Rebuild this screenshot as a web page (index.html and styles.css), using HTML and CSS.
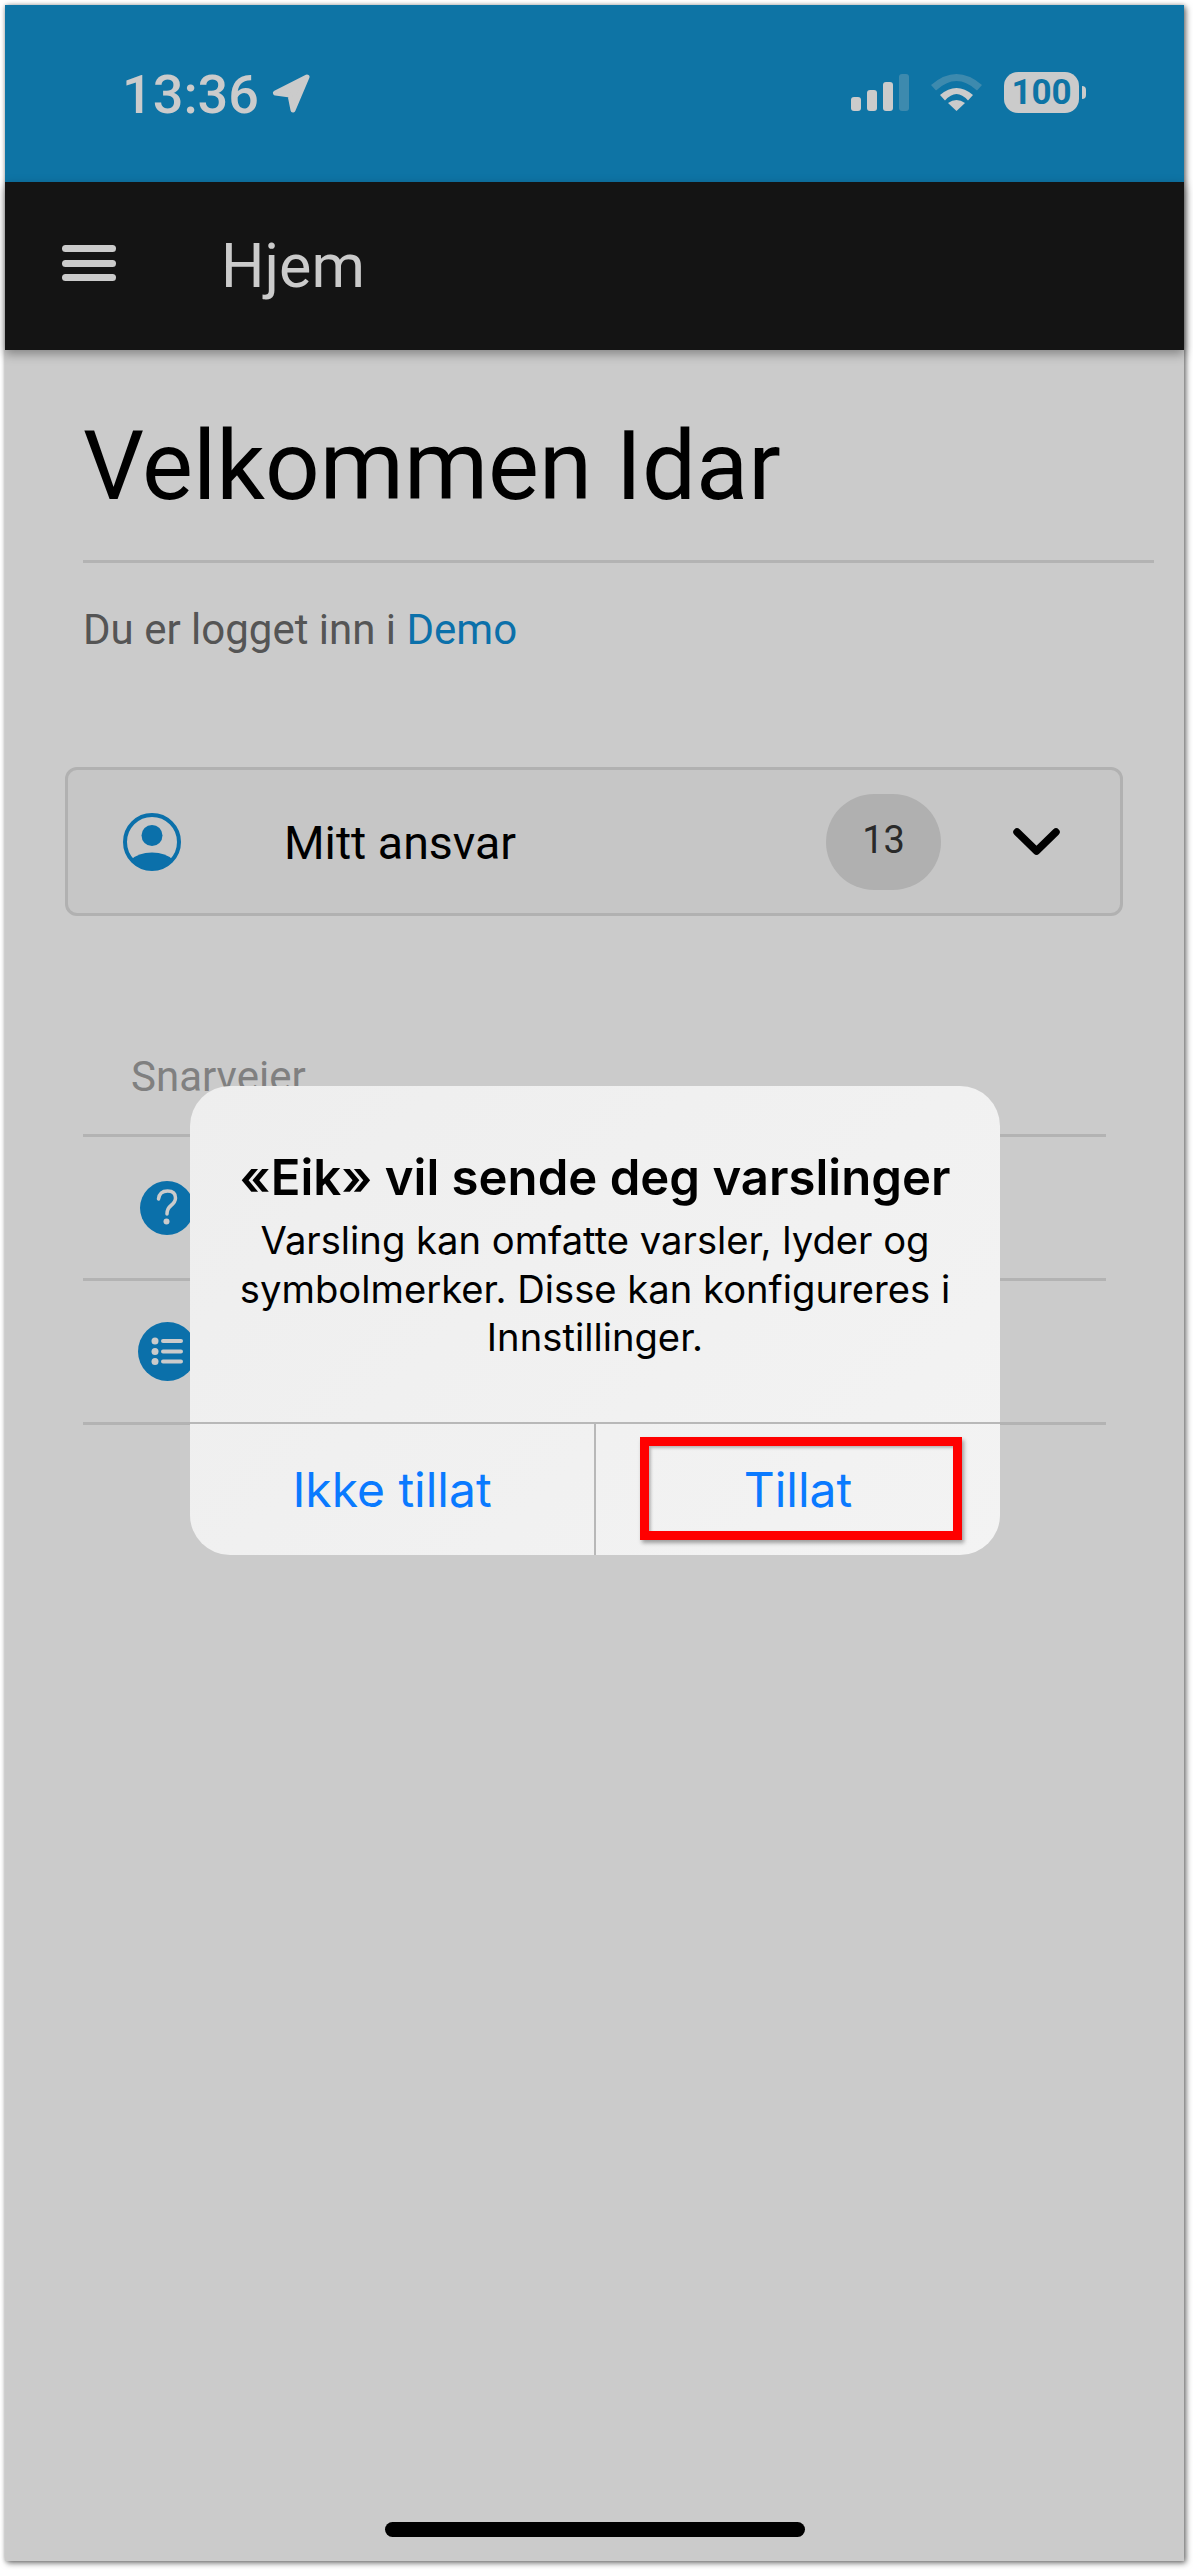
FILE: index.html
```html
<!DOCTYPE html>
<html lang="no">
<head>
<meta charset="utf-8">
<title>Eik</title>
<link rel="stylesheet" href="styles.css">
</head>
<body>
<div class="phone">
  <div class="status">
    <div class="status-left">
      <span class="time">13:36</span>
      <svg class="loc" viewBox="0 0 39 39"><path d="M35 3 3.500 19 18 21 21 36Z"/></svg>
    </div>
    <div class="status-right">
      <div class="signal"><i class="b1"></i><i class="b2"></i><i class="b3"></i><i class="b4"></i></div>
      <svg class="wifi" viewBox="0 0 51 37"><path class="dim" d="M0 11Q25.500-11 51 11L46 16.500Q25.500-2.500 5 16.500Z"/><path d="M9 21Q25.500 7 42 21L37 26.500Q25.500 13.500 14 26.500Z"/><path d="M17 29Q25.500 23 34 29L25.500 37Z"/></svg>
      <div class="battery"><span class="batt-body">100</span><span class="batt-nub"></span></div>
    </div>
  </div>
  <header class="appbar">
    <div class="burger"><i></i><i></i><i></i></div>
    <div class="appbar-title">Hjem</div>
  </header>
  <main class="content">
    <h1 class="welcome">Velkommen Idar</h1>
    <p class="logged">Du er logget inn i <a class="link">Demo</a></p>
    <div class="card">
      <svg class="person" viewBox="0 0 58 58"><circle cx="29" cy="29" r="27" fill="none" stroke="#0b70aa" stroke-width="4"/><circle cx="29" cy="22.500" r="10.500" fill="#0b70aa"/><path d="M8 47Q15 39.500 29 39.500T50 47A27 27 0 0 1 8 47Z" fill="#0b70aa"/></svg>
      <span class="card-label">Mitt ansvar</span>
      <span class="badge">13</span>
      <svg class="chevron" viewBox="0 0 47 27"><path d="M4 4 23.500 23 43 4" fill="none" stroke="#000" stroke-width="7.500" stroke-linecap="round" stroke-linejoin="round"/></svg>
    </div>
    <section class="shortcuts">
      <div class="shortcuts-head">Snarveier</div>
      <div class="row">
        <svg class="round-icon q" viewBox="0 0 54 54"><circle cx="27" cy="27" r="27" fill="#0b70aa"/><path d="M18.500 18Q19.500 10 27.500 10 35.500 10 35.500 17 35.500 21 31 24.500 27 27.500 27 33" fill="none" stroke="#cbcbcb" stroke-width="3.500" stroke-linecap="round"/><circle cx="26.500" cy="40.500" r="3" fill="#cbcbcb"/></svg>
      </div>
      <div class="row">
        <svg class="round-icon l" viewBox="0 0 59 59"><circle cx="29.500" cy="29.500" r="29.500" fill="#0b70aa"/><g fill="#cbcbcb"><circle cx="17" cy="19" r="3.500"/><circle cx="17" cy="29.500" r="3.500"/><circle cx="17" cy="39.500" r="3.500"/><rect x="23" y="17" width="22" height="4" rx="2"/><rect x="23" y="27.500" width="22" height="4" rx="2"/><rect x="23" y="37.500" width="22" height="4" rx="2"/></g></svg>
      </div>
    </section>
  </main>
  <div class="home-bar"></div>
  <div class="dialog">
    <div class="dialog-text">
      <div class="dialog-title">«Eik» vil sende deg varslinger</div>
      <div class="dialog-body">Varsling kan omfatte varsler, lyder og<br>symbolmerker. Disse kan konfigureres i<br>Innstillinger.</div>
    </div>
    <div class="dialog-buttons">
      <div class="dialog-btn">Ikke tillat</div>
      <div class="dialog-btn">Tillat</div>
    </div>
    <div class="highlight"></div>
  </div>
</div>
</body>
</html>
```
FILE: styles.css
```css
* { box-sizing: border-box; }
html, body { margin: 0; padding: 0; background: #fff; }
body { padding: 5px 0 0 5px; height: 2570px; overflow: hidden; font-family: Roboto, "Liberation Sans", sans-serif; }

.phone {
  position: relative;
  width: 1179px;
  height: 2556px;
  background: #cbcbcb;
  box-shadow: 2px 2px 6px rgba(0,0,0,.55), 0 0 4px rgba(0,0,0,.2);
  display: flex;
  flex-direction: column;
}

.status {
  height: 177px;
  background: #0e74a5;
  display: flex;
  justify-content: space-between;
  padding: 67px 98px 0 117px;
  color: #cbcbcb;
}
.status-left { display: flex; align-items: flex-start; gap: 13px; }
.time { font-size: 54px; font-weight: 500; line-height: 46px; }
.loc { width: 39px; height: 39px; margin-top: 2px; fill: #cbcbcb; stroke: #cbcbcb; stroke-width: 5; stroke-linejoin: round; }
.status-right { display: flex; align-items: flex-start; }
.signal { display: flex; align-items: flex-end; gap: 6px; height: 37px; margin-top: 2px; }
.signal i { display: block; width: 10px; border-radius: 3px; background: #cbcbcb; }
.b1 { height: 14px; }
.b2 { height: 21px; }
.b3 { height: 29px; }
.signal .b4 { height: 37px; background: rgba(203,203,203,.25); }
.wifi { width: 51px; height: 37px; margin: 2px 0 0 22px; fill: #cbcbcb; }
.wifi .dim { opacity: .25; }
.battery { display: flex; align-items: center; margin-left: 22px; height: 41px; }
.batt-body {
  width: 75px; height: 41px; border-radius: 14px; background: #cbcbcb;
  color: #0e74a5; font-size: 35px; font-weight: 700; line-height: 41px; text-align: center;
}
.batt-nub { width: 4px; height: 13px; margin-left: 3px; background: #cbcbcb; border-radius: 0 7px 7px 0; }

.appbar {
  height: 168px;
  background: #141414;
  display: flex;
  align-items: center;
  color: #cbcbcb;
  box-shadow: 0 4px 10px rgba(0,0,0,.35);
  position: relative;
}
.burger { display: flex; flex-direction: column; gap: 7.500px; margin-left: 57px; width: 54px; margin-top: -6px; }
.burger i { display: block; height: 7px; border-radius: 3.500px; background: #cbcbcb; }
.appbar-title { font-size: 61px; margin-left: 105px; font-weight: 400; line-height: 68px; }

.content { flex: 1; padding: 0 30px 0 78px; }
.welcome {
  margin: 0; padding: 60px 0 38px;
  font-size: 96px; font-weight: 400; line-height: 112px; color: #000;
  border-bottom: 3px solid #b3b3b3;
}
.logged { margin: 44px 0 0; font-size: 42px; line-height: 46px; color: #555; }
.link { color: #0b70aa; }

.card {
  display: flex; align-items: center;
  width: 1058px; height: 149px; margin: 114px 0 0 -18px;
  border: 3px solid #b1b1b1; border-radius: 12px; background: #c6c6c6;
  padding-right: 60px;
}
.person { width: 58px; height: 58px; margin-left: 55px; }
.card-label { margin-left: 103px; padding-top: 2px; font-size: 46.500px; color: #000; }
.badge {
  margin-left: auto; width: 115px; height: 96px; border-radius: 48px;
  background: #b0b0b0; color: #2a2a2a; font-size: 38px; font-weight: 400; line-height: 92px; text-align: center;
}
.chevron { width: 47px; height: 27px; margin-left: 72px; }

.shortcuts { width: 1023px; margin-top: 115px; }
.shortcuts-head {
  height: 106px; padding: 22px 0 0 48px;
  font-size: 42px; line-height: 48px; color: #808080;
  border-bottom: 3px solid #b3b3b3;
}
.row { height: 144px; border-bottom: 3px solid #b3b3b3; display: flex; align-items: center; }
.round-icon { display: block; }
.q { width: 54px; height: 54px; margin-left: 57px; }
.l { width: 59px; height: 59px; margin-left: 55px; }

.home-bar { width: 420px; height: 15px; border-radius: 8px; background: #000; margin: 0 auto 24px; }

.dialog {
  position: absolute; left: 185px; top: 1081px;
  width: 810px; height: 469px; border-radius: 40px;
  background: linear-gradient(135deg, #eeeeee, #f3f3f3);
  display: flex; flex-direction: column;
  font-family: Inter, Roboto, sans-serif;
}
.dialog-text { flex: none; height: 336px; padding-top: 62px; text-align: center; color: #000; }
.dialog-title { font-size: 49.100px; font-weight: 600; line-height: 58px; }
.dialog-body { font-size: 38.200px; line-height: 48.500px; margin-top: 10px; }
.dialog-buttons { flex: 1; min-height: 0; display: flex; border-top: 2px solid #b8b8b8; }
.dialog-btn { flex: 1; padding-top: 1px; color: #0a7aff; font-size: 48px; line-height: 130px; text-align: center; }
.dialog-btn + .dialog-btn { border-left: 2px solid #b8b8b8; }
.highlight {
  position: absolute; left: 450px; top: 351px; width: 322px; height: 103px;
  border: 9px solid #f00;
  box-shadow: 2px 3px 4px rgba(0,0,0,.35), inset 2px 2px 3px rgba(0,0,0,.25);
}
```
